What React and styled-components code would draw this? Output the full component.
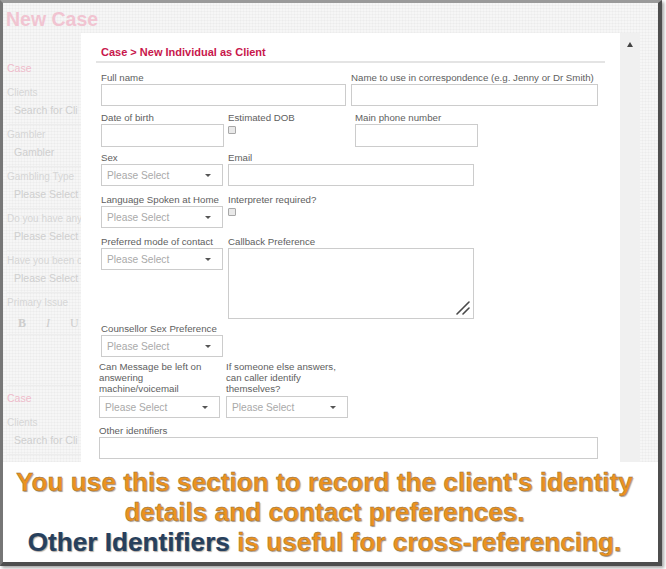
import React from "react";
import styled, { createGlobalStyle } from "styled-components";

const Global = createGlobalStyle`
  html, body { margin: 0; padding: 0; background: #ffffff; }
  body { font-family: "Liberation Sans", Arial, sans-serif; }
`;

const Frame = styled.div`
  width: 655px;
  height: 559px;
  margin: 0 4px 3px 0;
  border-top: 3px solid #9a9a9a;
  border-left: 3px solid #767676;
  border-right: 4px solid #4e4e4e;
  border-bottom: 4px solid #4e4e4e;
  box-shadow: 2px 2px 3px rgba(0, 0, 0, 0.35);
  display: flex;
  flex-direction: column;
  overflow: hidden;
`;

const Screen = styled.div`
  position: relative;
  height: 459px;
  overflow: hidden;
  background-color: #f6f6f6;
  background-image:
    repeating-linear-gradient(0deg, rgba(0, 0, 0, 0.025) 0 1px, transparent 1px 3px),
    repeating-linear-gradient(90deg, rgba(0, 0, 0, 0.02) 0 1px, transparent 1px 3px);
`;

/* faded page behind the dialog */
const PageTitle = styled.div`
  height: 32px;
  line-height: 32px;
  padding-left: 3px;
  font-size: 19.5px;
  font-weight: bold;
  color: #f1c4d1;
`;

const Sidebar = styled.div`
  width: 74px;
  padding-left: 4px;
  white-space: nowrap;
  overflow: hidden;
`;

const SideSection = styled.div`
  margin-top: ${(p) => p.$top}px;
  line-height: 12px;
  font-size: 10.5px;
  color: #efbccb;
`;

const SideGroup = styled.div`
  margin-top: ${(p) => p.$top || 0}px;
  padding-bottom: 3px;
  margin-bottom: 4px;
  border-bottom: 1px solid #ededed;
`;

const SideLabel = styled.div`
  line-height: 12px;
  font-size: 10px;
  color: #d6d6d6;
`;

const SideValue = styled.div`
  height: 22px;
  line-height: 22px;
  padding-left: 7px;
  font-size: 10.5px;
  color: #cfcfcf;
`;

const EditorBar = styled.div`
  margin-top: 3px;
  height: 22px;
  display: flex;
  align-items: center;
  gap: 20px;
  padding-left: 11px;
  font-family: "Liberation Serif", serif;
  font-size: 12px;
  color: #cdcdcd;
  border-bottom: 1px solid #eeeeee;
`;

const EditorArea = styled.div`
  height: 50px;
  border-bottom: 1px solid #ededed;
`;

/* dialog */
const Dialog = styled.div`
  position: absolute;
  left: 78px;
  top: 30px;
  bottom: 0;
  width: 559px;
  display: flex;
`;

const DialogBody = styled.div`
  flex: 1;
  background: #ffffff;
  padding: 12px 15px 0 15px;
  overflow: hidden;
`;

const Scroll = styled.div`
  width: 20px;
  background: #f0f0f0;
  display: flex;
  justify-content: center;
  padding-top: 9px;
  box-sizing: border-box;
`;

const Arrow = styled.div`
  width: 0;
  height: 0;
  border-left: 3.5px solid transparent;
  border-right: 3.5px solid transparent;
  border-bottom: 5px solid #444;
`;

const Title = styled.div`
  padding-left: 5px;
  font-size: 11px;
  line-height: 14px;
  font-weight: bold;
  color: #c8174c;
`;

const Divider = styled.div`
  margin-top: 2px;
  height: 2px;
  background: #e4e4e4;
`;

const Form = styled.div`
  margin-top: 3px;
  display: flex;
  flex-direction: column;
`;

const Row = styled.div`
  display: flex;
  align-items: flex-start;
  margin-top: ${(p) => p.$mt}px;
  gap: ${(p) => p.$gap || 4}px;
  padding-left: ${(p) => (p.$left === undefined ? 5 : p.$left)}px;
`;

const Field = styled.div`
  width: ${(p) => p.$w}px;
  display: flex;
  flex-direction: column;
`;

const Label = styled.div`
  font-size: 9.7px;
  line-height: ${(p) => p.$lh || 12}px;
  color: #5e5e5e;
  white-space: ${(p) => (p.$wrap ? "normal" : "nowrap")};
  margin-bottom: ${(p) => p.$mb || 0}px;
`;

const Input = styled.div`
  width: ${(p) => p.$w || "100%"};
  height: ${(p) => p.$h || 22}px;
  box-sizing: border-box;
  border: 1px solid #cccccc;
  background: #ffffff;
  position: relative;
`;

const Select = styled.div`
  width: ${(p) => p.$w || 122}px;
  height: 22px;
  box-sizing: border-box;
  border: 1px solid #cccccc;
  display: flex;
  align-items: center;
  justify-content: space-between;
  padding: 0 11px 0 5px;
  font-size: 10.2px;
  color: #a9a9a9;
`;

const Caret = styled.span`
  width: 0;
  height: 0;
  border-left: 3px solid transparent;
  border-right: 3px solid transparent;
  border-top: 3.5px solid #555;
`;

const Check = styled.div`
  margin-top: 2px;
  width: 8px;
  height: 8px;
  box-sizing: border-box;
  border: 1px solid #a8a8a8;
  border-radius: 1px;
  background: #e9e9e9;
`;

const Grip = styled.svg`
  position: absolute;
  right: 3px;
  bottom: 3px;
`;

/* caption */
const Caption = styled.div`
  flex: 1;
  background: #ffffff;
  padding: 5px 12px 0 0;
  text-align: center;
  font-size: 26.2px;
  line-height: 30px;
  font-weight: bold;
  color: #eb921e;
  -webkit-text-stroke: 0.35px #8a6a42;
  text-shadow: 1px 1px 1px rgba(60, 40, 20, 0.4);
`;

const Strong = styled.span`
  color: #27405d;
  -webkit-text-stroke: 0.2px #27405d;
`;

const Dropdown = ({ w }) => (
  <Select $w={w}>
    Please Select
    <Caret />
  </Select>
);

export default function App() {
  return (
    <>
      <Global />
      <Frame>
        <Screen>
          <PageTitle>New Case</PageTitle>
          <Sidebar>
            <SideSection $top={27}>Case</SideSection>
            <SideGroup $top={13}>
              <SideLabel>Clients</SideLabel>
              <SideValue>Search for Cli</SideValue>
            </SideGroup>
            <SideGroup>
              <SideLabel>Gambler</SideLabel>
              <SideValue>Gambler</SideValue>
            </SideGroup>
            <SideGroup>
              <SideLabel>Gambling Type</SideLabel>
              <SideValue>Please Select</SideValue>
            </SideGroup>
            <SideGroup>
              <SideLabel>Do you have any</SideLabel>
              <SideValue>Please Select</SideValue>
            </SideGroup>
            <SideGroup>
              <SideLabel>Have you been c</SideLabel>
              <SideValue>Please Select</SideValue>
            </SideGroup>
            <SideLabel>Primary Issue</SideLabel>
            <EditorBar>
              <b>B</b>
              <i>I</i>
              <span>U</span>
            </EditorBar>
            <EditorArea />
            <SideSection $top={6}>Case</SideSection>
            <SideGroup $top={13}>
              <SideLabel>Clients</SideLabel>
              <SideValue>Search for Cli</SideValue>
            </SideGroup>
          </Sidebar>

          <Dialog>
            <DialogBody>
              <Title>Case &gt; New Individual as Client</Title>
              <Divider />
              <Form>
                <Row $mt={6} $gap={5}>
                  <Field $w={245}>
                    <Label>Full name</Label>
                    <Input />
                  </Field>
                  <Field $w={247}>
                    <Label>Name to use in correspondence (e.g. Jenny or Dr Smith)</Label>
                    <Input />
                  </Field>
                </Row>
                <Row $mt={6}>
                  <Field $w={123}>
                    <Label>Date of birth</Label>
                    <Input $h={23} />
                  </Field>
                  <Field $w={123}>
                    <Label>Estimated DOB</Label>
                    <Check />
                  </Field>
                  <Field $w={123}>
                    <Label>Main phone number</Label>
                    <Input $h={23} />
                  </Field>
                </Row>
                <Row $mt={5}>
                  <Field $w={123}>
                    <Label>Sex</Label>
                    <Dropdown />
                  </Field>
                  <Field $w={246}>
                    <Label>Email</Label>
                    <Input />
                  </Field>
                </Row>
                <Row $mt={8}>
                  <Field $w={123}>
                    <Label>Language Spoken at Home</Label>
                    <Dropdown />
                  </Field>
                  <Field $w={123}>
                    <Label>Interpreter required?</Label>
                    <Check />
                  </Field>
                </Row>
                <Row $mt={8}>
                  <Field $w={123}>
                    <Label>Preferred mode of contact</Label>
                    <Dropdown />
                  </Field>
                  <Field $w={246}>
                    <Label>Callback Preference</Label>
                    <Input $h={71}>
                      <Grip width="14" height="14" viewBox="0 0 14 14">
                        <path d="M1 13 L13 1 M7 13 L13 7" stroke="#4a4a4a" strokeWidth="1.6" strokeLinecap="round" />
                      </Grip>
                    </Input>
                  </Field>
                </Row>
                <Row $mt={4}>
                  <Field $w={123}>
                    <Label>Counsellor Sex Preference</Label>
                    <Dropdown />
                  </Field>
                </Row>
                <Row $mt={4} $left={3} $gap={6}>
                  <Field $w={121}>
                    <Label $wrap $lh={11} $mb={2}>
                      Can Message be left on answering machine/voicemail
                    </Label>
                    <Dropdown w={121} />
                  </Field>
                  <Field $w={122}>
                    <Label $wrap $lh={11} $mb={2}>
                      If someone else answers, can caller identify themselves?
                    </Label>
                    <Dropdown w={122} />
                  </Field>
                </Row>
                <Row $mt={7} $left={3}>
                  <Field $w={499}>
                    <Label>Other identifiers</Label>
                    <Input />
                  </Field>
                </Row>
              </Form>
            </DialogBody>
            <Scroll>
              <Arrow />
            </Scroll>
          </Dialog>
        </Screen>
        <Caption>
          You use this section to record the client's identity
          <br />
          details and contact preferences.
          <br />
          <Strong>Other Identifiers</Strong> is useful for cross-referencing.
        </Caption>
      </Frame>
    </>
  );
}
